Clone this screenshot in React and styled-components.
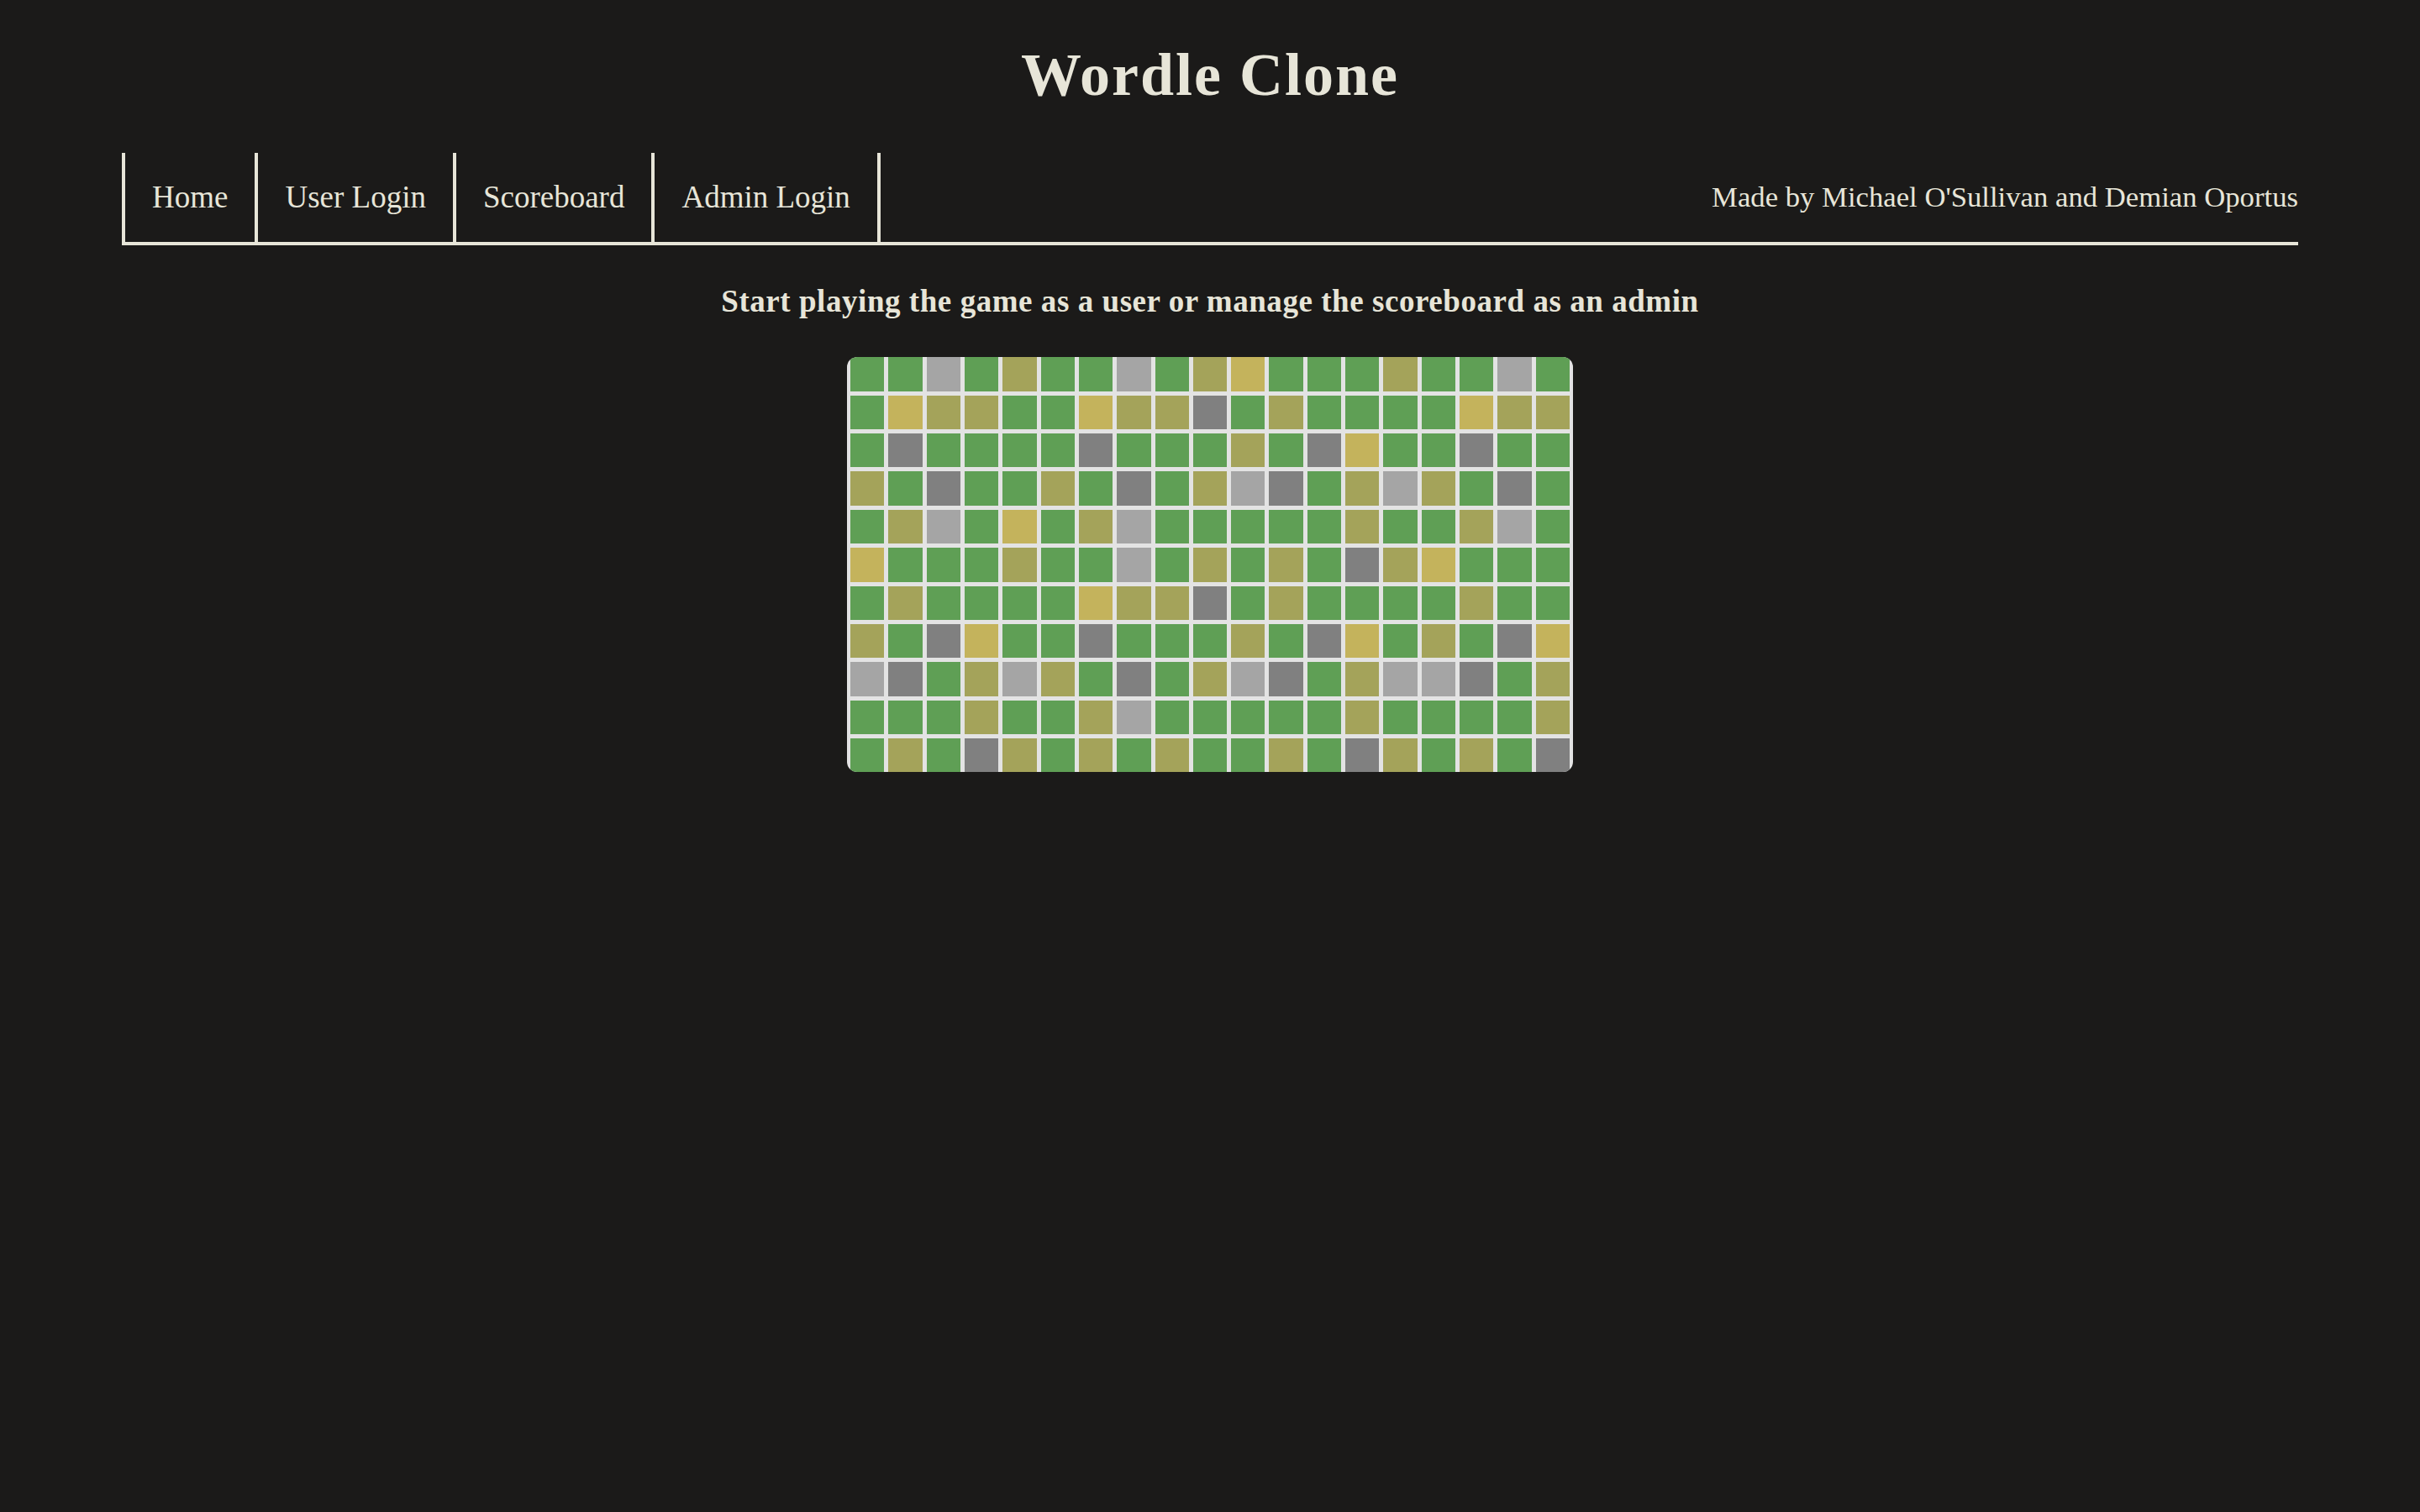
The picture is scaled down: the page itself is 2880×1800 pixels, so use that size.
import React from 'react';
import styled, { createGlobalStyle } from 'styled-components';

const GlobalStyle = createGlobalStyle`
  html, body {
    margin: 0;
    padding: 0;
    background-color: #1b1a19;
  }

  body {
    color: #e7e5d8;
    font-family: "Liberation Serif", "Times New Roman", serif;
  }
`;

const Page = styled.div`
  min-height: 100vh;
  padding: 0 145px;
  box-sizing: border-box;
`;

const Title = styled.h1`
  margin: 48px 0 51px;
  text-align: center;
  font-size: 72px;
  line-height: 1.15;
  font-weight: 700;
  letter-spacing: 2px;
`;

const Nav = styled.nav`
  display: flex;
  align-items: stretch;
  height: 106px;
  border-left: 4px solid #e7e5d8;
  border-bottom: 4px solid #e7e5d8;
`;

const NavList = styled.ul`
  display: flex;
  margin: 0;
  padding: 0;
  list-style: none;
`;

const NavItem = styled.li`
  display: flex;
  align-items: center;
  padding: 0 32px;
  border-right: 4px solid #e7e5d8;
  font-size: 37px;
  line-height: 1.15;
  cursor: pointer;
`;

const Credit = styled.div`
  margin-left: auto;
  align-self: center;
  font-size: 34.7px;
  line-height: 1.15;
`;

const Subtitle = styled.h2`
  margin: 46px 0 45px;
  text-align: center;
  font-size: 37px;
  line-height: 1.15;
  font-weight: 700;
  letter-spacing: 0.55px;
`;

const Mosaic = styled.div`
  display: grid;
  grid-template-columns: repeat(19, 1fr);
  grid-template-rows: repeat(11, 1fr);
  gap: 5px;
  width: 864px;
  height: 494px;
  margin: 0 auto;
  padding: 0 4px;
  box-sizing: border-box;
  border-radius: 12px;
  overflow: hidden;
  background-color: #e3e3e3;
`;

const tileColors = {
  G: '#5f9f55',
  O: '#a4a35a',
  Y: '#c4b35c',
  D: '#808080',
  L: '#a5a5a5',
};

const Tile = styled.div`
  background-color: ${(p) => tileColors[p.$kind]};
`;

// one string per row: G green, O olive, Y yellow, D dark grey, L light grey
const rows = [
  'GGLGOGGLGOYGGGOGGLG',
  'GYOOGGYOODGOGGGGYOO',
  'GDGGGGDGGGOGDYGGDGG',
  'OGDGGOGDGOLDGOLOGDG',
  'GOLGYGOLGGGGGOGGOLG',
  'YGGGOGGLGOGOGDOYGGG',
  'GOGGGGYOODGOGGGGOGG',
  'OGDYGGDGGGOGDYGOGDY',
  'LDGOLOGDGOLDGOLLDGO',
  'GGGOGGOLGGGGGOGGGGO',
  'GOGDOGOGOGGOGDOGOGD',
];

const links = ['Home', 'User Login', 'Scoreboard', 'Admin Login'];

function App() {
  return (
    <>
      <GlobalStyle />
      <Page>
        <Title>Wordle Clone</Title>
        <Nav>
          <NavList>
            {links.map((l) => (
              <NavItem key={l}>{l}</NavItem>
            ))}
          </NavList>
          <Credit>Made by Michael O'Sullivan and Demian Oportus</Credit>
        </Nav>
        <Subtitle>Start playing the game as a user or manage the scoreboard as an admin</Subtitle>
        <Mosaic>
          {rows.map((row, r) =>
            row.split('').map((k, c) => <Tile key={`${r}-${c}`} $kind={k} />)
          )}
        </Mosaic>
      </Page>
    </>
  );
}

export default App;
